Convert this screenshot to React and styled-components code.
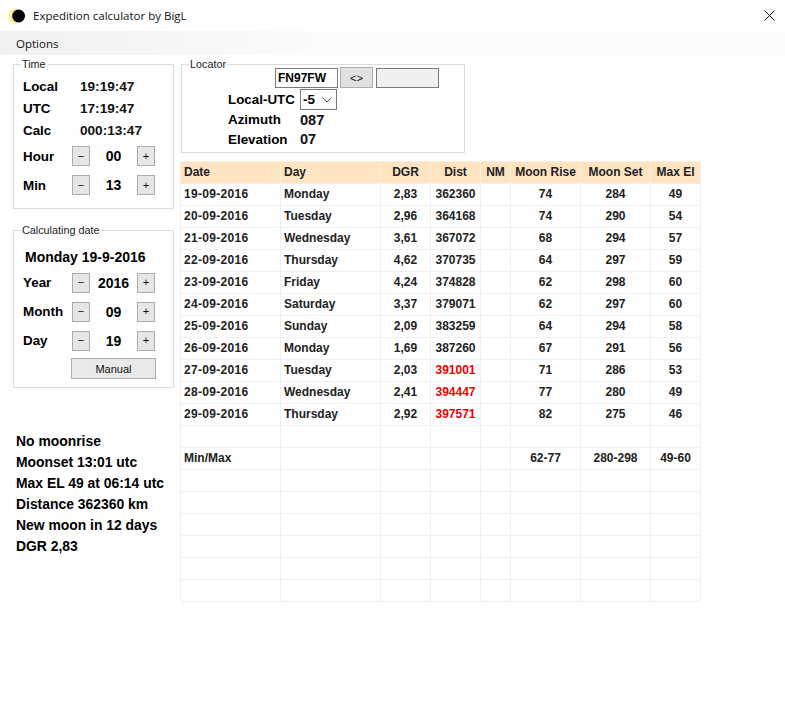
import styled, { createGlobalStyle } from "styled-components";

const GlobalStyle = createGlobalStyle`
  html, body {
    margin: 0;
    padding: 0;
    background: #fff;
  }
  body {
    font-family: "Liberation Sans", Arial, sans-serif;
    color: #000;
    overflow: hidden;
  }
`;

const Window = styled.div`
  width: 785px;
  height: 713px;
  display: flex;
  flex-direction: column;
`;

const TitleBar = styled.div`
  height: 31px;
  display: flex;
  align-items: center;
  padding: 0 10px 0 9px;
  flex-shrink: 0;
`;

const TitleText = styled.span`
  font-family: "Open Sans", sans-serif;
  font-size: 11.5px;
  margin-left: 8px;
  flex: 1;
  color: #111;
`;

const MenuBar = styled.div`
  height: 24px;
  display: flex;
  align-items: center;
  padding-left: 16px;
  background: linear-gradient(to right, #f1f1f1, #fbfbfb 40%, #fbfbfb);
  font-family: "Open Sans", sans-serif;
  font-size: 11.5px;
  color: #111;
  flex-shrink: 0;
`;

const Body = styled.div`
  display: flex;
  padding: 3px 0 0 13px;
  gap: 7px;
`;

const LeftColumn = styled.div`
  width: 161px;
  display: flex;
  flex-direction: column;
  flex-shrink: 0;
`;

const RightColumn = styled.div`
  display: flex;
  flex-direction: column;
`;

const Group = styled.fieldset`
  box-sizing: border-box;
  margin: 0;
  padding: 0;
  border: 1px solid #dcdcdc;
  height: ${(p) => p.$height}px;
  width: ${(p) => p.$width || 161}px;
  margin-top: ${(p) => p.$top || 0}px;
`;

const Legend = styled.legend`
  font-size: 10.8px;
  line-height: 12px;
  padding: 0 1px;
  margin-left: 7px;
  color: #222;
`;

const TimeRows = styled.div`
  padding: 5px 0 0 9px;
  display: grid;
  grid-template-columns: 57px 1fr;
  grid-auto-rows: 22px;
  align-items: center;
`;

const Label = styled.span`
  font-size: 13.4px;
  font-weight: 700;
  white-space: nowrap;
`;

const TimeValue = styled.span`
  font-size: 13.6px;
  font-weight: 700;
  color: #111;
`;

const StepRow = styled.div`
  display: grid;
  grid-template-columns: 49px 18px 47px 18px;
  align-items: center;
  height: ${(p) => p.$height}px;
  padding-left: 9px;
`;

const StepButton = styled.button`
  box-sizing: border-box;
  width: 18px;
  height: 20px;
  padding: 0;
  border: 1px solid #adadad;
  background: #e6e6e6;
  font-family: "Liberation Sans", sans-serif;
  font-size: 11px;
  color: #111;
  line-height: 1;
`;

const StepValue = styled.span`
  font-size: 14px;
  font-weight: 700;
  text-align: center;
`;

const DateTitle = styled.div`
  font-size: 14px;
  font-weight: 700;
  padding: 13px 0 3px 11px;
  height: 16px;
  line-height: 16px;
  white-space: nowrap;
`;

const ManualRow = styled.div`
  padding: 3px 0 0 57px;
`;

const ManualButton = styled.button`
  box-sizing: border-box;
  width: 85px;
  height: 21px;
  padding: 0;
  border: 1px solid #adadad;
  background: #e9e9e9;
  font-family: "Liberation Sans", sans-serif;
  font-size: 11px;
  color: #111;
`;

const InfoList = styled.div`
  margin: 43px 0 0 3px;
  display: flex;
  flex-direction: column;
`;

const InfoLine = styled.div`
  font-size: 13.9px;
  font-weight: 700;
  height: 21px;
  line-height: 21px;
  white-space: nowrap;
`;

const LocatorTop = styled.div`
  display: flex;
  align-items: flex-start;
  margin-top: -3px;
  padding: 0 0 0 93px;
  gap: 2px;
`;

const LocatorInput = styled.div`
  box-sizing: border-box;
  width: 63px;
  height: 20px;
  margin-top: 1px;
  border: 1px solid #7a7a7a;
  background: ${(p) => (p.$empty ? "#f0f0f0" : "#fff")};
  font-size: 12px;
  font-weight: 700;
  line-height: 18px;
  padding-left: 2px;
  margin-left: ${(p) => (p.$empty ? 1 : 0)}px;
`;

const SwapButton = styled.button`
  box-sizing: border-box;
  width: 33px;
  height: 21px;
  padding: 0;
  border: 1px solid #adadad;
  background: #e1e1e1;
  font-family: "Liberation Sans", sans-serif;
  font-size: 11px;
  color: #111;
`;

const LocatorRows = styled.div`
  padding: 1px 0 0 46px;
  display: grid;
  grid-template-columns: 72px 1fr;
  grid-template-rows: 21px 19px 20px;
  align-items: center;
`;

const SelectBox = styled.div`
  box-sizing: border-box;
  width: 37px;
  height: 21px;
  border: 1px solid #7a7a7a;
  display: flex;
  align-items: center;
  justify-content: space-between;
  padding: 0 4px 0 2px;
  font-size: 13.4px;
  font-weight: 700;
`;

const LocatorValue = styled.span`
  font-size: 14.6px;
  font-weight: 700;
  color: #111;
`;

const Grid = styled.div`
  display: grid;
  grid-template-columns: 100px 100px 50px 50px 30px 70px 70px 50px;
  grid-auto-rows: 22px;
  width: 520px;
  margin: 8px 0 0 -1px;
  border-right: 1px solid #f0f0f0;
  border-bottom: 1px solid #f0f0f0;
`;

const Cell = styled.div`
  box-sizing: border-box;
  border-left: 1px solid ${(p) => (p.$head ? "#fdeedd" : "#f0f0f0")};
  border-top: 1px solid ${(p) => (p.$head ? "#fdeedd" : "#f0f0f0")};
  background: ${(p) => (p.$head ? "#ffe4c4" : "#fff")};
  font-size: 12px;
  font-weight: 700;
  line-height: 21px;
  letter-spacing: ${(p) => (p.$spaced ? "0.3px" : "normal")};
  padding: ${(p) => (p.$left ? "0 0 0 3px" : "0")};
  text-align: ${(p) => (p.$left ? "left" : "center")};
  color: ${(p) => (p.$red ? "#f00000" : "#222")};
  white-space: nowrap;
  overflow: hidden;
`;

const columns = ["Date", "Day", "DGR", "Dist", "NM", "Moon Rise", "Moon Set", "Max El"];

const rows = [
  ["19-09-2016", "Monday", "2,83", "362360", "", "74", "284", "49"],
  ["20-09-2016", "Tuesday", "2,96", "364168", "", "74", "290", "54"],
  ["21-09-2016", "Wednesday", "3,61", "367072", "", "68", "294", "57"],
  ["22-09-2016", "Thursday", "4,62", "370735", "", "64", "297", "59"],
  ["23-09-2016", "Friday", "4,24", "374828", "", "62", "298", "60"],
  ["24-09-2016", "Saturday", "3,37", "379071", "", "62", "297", "60"],
  ["25-09-2016", "Sunday", "2,09", "383259", "", "64", "294", "58"],
  ["26-09-2016", "Monday", "1,69", "387260", "", "67", "291", "56"],
  ["27-09-2016", "Tuesday", "2,03", "391001", "", "71", "286", "53"],
  ["28-09-2016", "Wednesday", "2,41", "394447", "", "77", "280", "49"],
  ["29-09-2016", "Thursday", "2,92", "397571", "", "82", "275", "46"],
  ["", "", "", "", "", "", "", ""],
  ["Min/Max", "", "", "", "", "62-77", "280-298", "49-60"],
  ["", "", "", "", "", "", "", ""],
  ["", "", "", "", "", "", "", ""],
  ["", "", "", "", "", "", "", ""],
  ["", "", "", "", "", "", "", ""],
  ["", "", "", "", "", "", "", ""],
  ["", "", "", "", "", "", "", ""],
];

const info = [
  "No moonrise",
  "Moonset 13:01 utc",
  "Max EL 49 at 06:14 utc",
  "Distance 362360 km",
  "New moon in 12 days",
  "DGR 2,83",
];

const MoonIcon = () => (
  <svg width="16" height="16" viewBox="0 0 16 16">
    <path d="M6 0.3 A7.8 7.8 0 0 0 6 15.7 L9 15 L9 1 Z" fill="#f7ee96" />
    <circle cx="9.6" cy="8" r="6.4" fill="#000" />
  </svg>
);

const CloseIcon = () => (
  <svg width="11" height="11" viewBox="0 0 11 11">
    <path d="M0.5 0.5 L10.5 10.5 M10.5 0.5 L0.5 10.5" stroke="#111" strokeWidth="1" fill="none" />
  </svg>
);

const Chevron = () => (
  <svg width="10" height="6" viewBox="0 0 10 6">
    <path d="M0.5 0.5 L5 5 L9.5 0.5" stroke="#555" strokeWidth="1" fill="none" />
  </svg>
);

const Stepper = ({ label, value, height }) => (
  <StepRow $height={height}>
    <Label>{label}</Label>
    <StepButton>−</StepButton>
    <StepValue>{value}</StepValue>
    <StepButton>+</StepButton>
  </StepRow>
);

const isLeft = (i) => i < 2;
const isRed = (i, r) => i === 3 && ["391001", "394447", "397571"].includes(r[3]);
const isDate = (i, v) => i === 0 && /^\d/.test(v);

const App = () => {
  return (
    <Window>
      <GlobalStyle />
      <TitleBar>
        <MoonIcon />
        <TitleText>Expedition calculator by BigL</TitleText>
        <CloseIcon />
      </TitleBar>
      <MenuBar>Options</MenuBar>
      <Body>
        <LeftColumn>
          <Group $height={151}>
            <Legend>Time</Legend>
            <TimeRows>
              <Label>Local</Label>
              <TimeValue>19:19:47</TimeValue>
              <Label>UTC</Label>
              <TimeValue>17:19:47</TimeValue>
              <Label>Calc</Label>
              <TimeValue>000:13:47</TimeValue>
            </TimeRows>
            <Stepper label="Hour" value="00" height={30} />
            <Stepper label="Min" value="13" height={28} />
          </Group>
          <Group $height={164} $top={15}>
            <Legend>Calculating date</Legend>
            <DateTitle>Monday 19-9-2016</DateTitle>
            <Stepper label="Year" value="2016" height={29} />
            <Stepper label="Month" value="09" height={29} />
            <Stepper label="Day" value="19" height={29} />
            <ManualRow>
              <ManualButton>Manual</ManualButton>
            </ManualRow>
          </Group>
          <InfoList>
            {info.map((line) => (
              <InfoLine key={line}>{line}</InfoLine>
            ))}
          </InfoList>
        </LeftColumn>
        <RightColumn>
          <Group $height={95} $width={284}>
            <Legend>Locator</Legend>
            <LocatorTop>
              <LocatorInput>FN97FW</LocatorInput>
              <SwapButton>&lt;&gt;</SwapButton>
              <LocatorInput $empty />
            </LocatorTop>
            <LocatorRows>
              <Label>Local-UTC</Label>
              <SelectBox>
                -5
                <Chevron />
              </SelectBox>
              <Label>Azimuth</Label>
              <LocatorValue>087</LocatorValue>
              <Label>Elevation</Label>
              <LocatorValue>07</LocatorValue>
            </LocatorRows>
          </Group>
          <Grid>
            {columns.map((c, i) => (
              <Cell key={c} $head $left={isLeft(i)}>
                {c}
              </Cell>
            ))}
            {rows.map((r, ri) =>
              r.map((v, i) => (
                <Cell key={`${ri}-${i}`} $left={isLeft(i)} $red={isRed(i, r)} $spaced={isDate(i, v)}>
                  {v}
                </Cell>
              ))
            )}
          </Grid>
        </RightColumn>
      </Body>
    </Window>
  );
};

export default App;
